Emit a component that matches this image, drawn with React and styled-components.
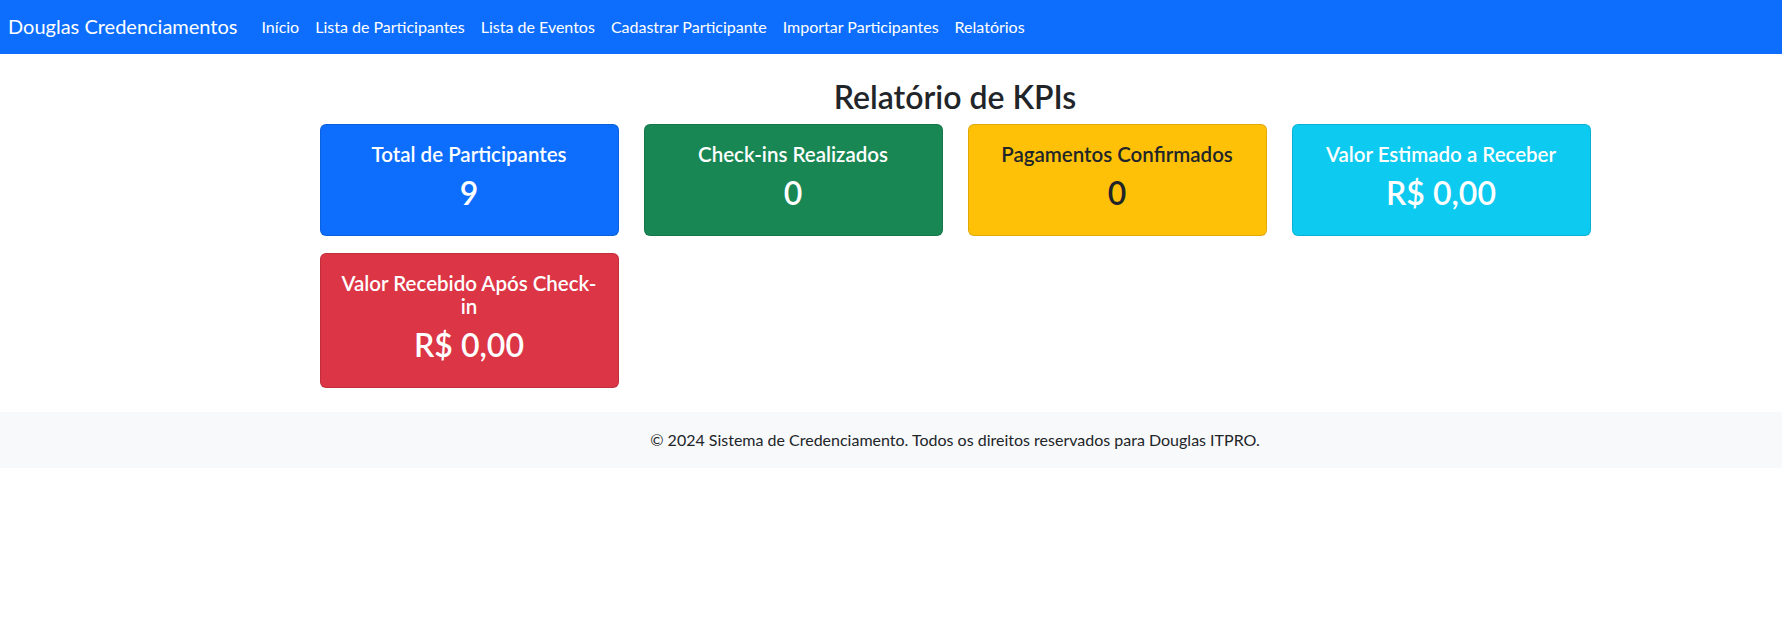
import React from "react";
import styled, { createGlobalStyle } from "styled-components";

const GlobalStyle = createGlobalStyle`
  body {
    margin: 0;
    font-family: Lato, "Segoe UI", "Liberation Sans", sans-serif;
    color: #212529;
    background: #fff;
  }
`;

const Navbar = styled.nav`
  display: flex;
  align-items: center;
  height: 54px;
  padding: 0 8px 2px;
  box-sizing: border-box;
  background: #0d6efd;
`;

const Brand = styled.a`
  color: #fff;
  font-size: 20px;
  margin-right: 16px;
  text-decoration: none;
`;

const NavLink = styled.a`
  color: #fff;
  font-size: 16px;
  padding: 0 8px;
  text-decoration: none;
`;

const Main = styled.main`
  display: flex;
  justify-content: center;
  padding-left: 128px;
`;

const Container = styled.div`
  width: 1271px;
`;

const Heading = styled.h2`
  margin: 24px 0 8px;
  text-align: center;
  font-size: 32px;
  line-height: 38px;
  font-weight: 600;
`;

const Grid = styled.div`
  display: grid;
  grid-template-columns: repeat(4, 299px);
  column-gap: 25px;
  row-gap: 17px;
  align-items: start;
`;

const Card = styled.div`
  background: ${(props) => props.$bg};
  color: ${(props) => props.$fg};
  border: 1px solid rgba(0, 0, 0, 0.12);
  border-radius: 6px;
  padding: 16px;
  text-align: center;
`;

const CardTitle = styled.h5`
  margin: 2px 0 8px;
  font-size: 20.5px;
  line-height: 23px;
  font-weight: 600;
`;

const CardValue = styled.p`
  margin: 0 0 7px;
  font-size: 32px;
  line-height: 38px;
  font-weight: 600;
`;

const Footer = styled.footer`
  margin-top: 24px;
  padding: 16px 0 16px 128px;
  background: #f8f9fa;
  text-align: center;
  font-size: 16px;
  line-height: 24px;
`;

const links = [
  "Início",
  "Lista de Participantes",
  "Lista de Eventos",
  "Cadastrar Participante",
  "Importar Participantes",
  "Relatórios",
];

const kpis = [
  { title: "Total de Participantes", value: "9", bg: "#0d6efd", fg: "#fff" },
  { title: "Check-ins Realizados", value: "0", bg: "#198754", fg: "#fff" },
  { title: "Pagamentos Confirmados", value: "0", bg: "#ffc107", fg: "#212529" },
  { title: "Valor Estimado a Receber", value: "R$ 0,00", bg: "#0dcaf0", fg: "#fff" },
  { title: "Valor Recebido Após Check-in", value: "R$ 0,00", bg: "#dc3545", fg: "#fff" },
];

export default function App() {
  return (
    <>
      <GlobalStyle />
      <Navbar>
        <Brand href="#">Douglas Credenciamentos</Brand>
        {links.map((link) => (
          <NavLink href="#" key={link}>
            {link}
          </NavLink>
        ))}
      </Navbar>
      <Main>
        <Container>
          <Heading>Relatório de KPIs</Heading>
          <Grid>
            {kpis.map((kpi) => (
              <Card key={kpi.title} $bg={kpi.bg} $fg={kpi.fg}>
                <CardTitle>{kpi.title}</CardTitle>
                <CardValue>{kpi.value}</CardValue>
              </Card>
            ))}
          </Grid>
        </Container>
      </Main>
      <Footer>
        © 2024 Sistema de Credenciamento. Todos os direitos reservados para
        Douglas ITPRO.
      </Footer>
    </>
  );
}
